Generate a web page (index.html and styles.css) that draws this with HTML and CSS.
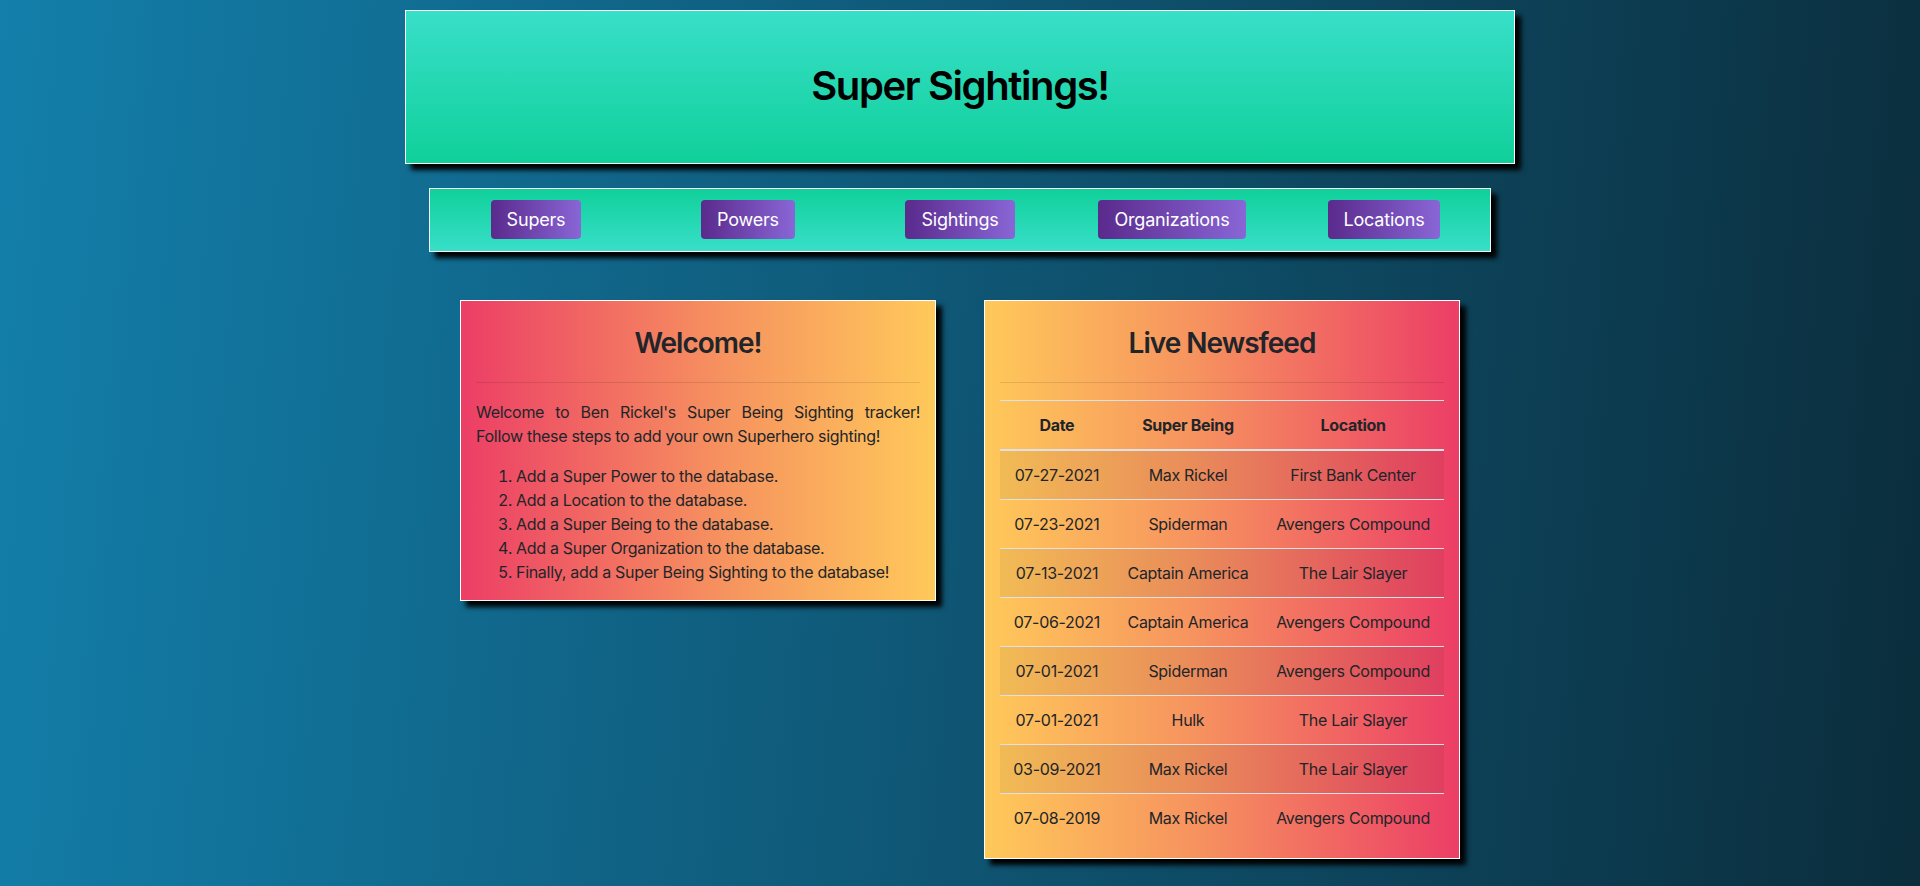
FILE: index.html
```html
<!DOCTYPE html>
<html lang="en">
<head>
<meta charset="utf-8">
<title>Super Sightings!</title>
<link rel="stylesheet" href="styles.css">
</head>
<body>
<div class="page">
  <header class="banner">
    <h1 class="banner-title">Super Sightings!</h1>
  </header>

  <nav class="nav">
    <div class="nav-cell"><a class="nav-btn" href="#">Supers</a></div>
    <div class="nav-cell"><a class="nav-btn" href="#">Powers</a></div>
    <div class="nav-cell"><a class="nav-btn" href="#">Sightings</a></div>
    <div class="nav-cell"><a class="nav-btn" href="#">Organizations</a></div>
    <div class="nav-cell"><a class="nav-btn" href="#">Locations</a></div>
  </nav>

  <main class="cards">
    <section class="card card-welcome">
      <h3 class="card-title">Welcome!</h3>
      <hr class="card-rule">
      <p class="welcome-text">Welcome to Ben Rickel's Super Being Sighting tracker! Follow these steps to add your own Superhero sighting!</p>
      <ol class="steps">
        <li>Add a Super Power to the database.</li>
        <li>Add a Location to the database.</li>
        <li>Add a Super Being to the database.</li>
        <li>Add a Super Organization to the database.</li>
        <li>Finally, add a Super Being Sighting to the database!</li>
      </ol>
    </section>

    <section class="card card-news">
      <h3 class="card-title">Live Newsfeed</h3>
      <hr class="card-rule">
      <table class="feed">
        <thead>
          <tr><th>Date</th><th>Super Being</th><th>Location</th></tr>
        </thead>
        <tbody>
          <tr><td>07-27-2021</td><td>Max Rickel</td><td>First Bank Center</td></tr>
          <tr><td>07-23-2021</td><td>Spiderman</td><td>Avengers Compound</td></tr>
          <tr><td>07-13-2021</td><td>Captain America</td><td>The Lair Slayer</td></tr>
          <tr><td>07-06-2021</td><td>Captain America</td><td>Avengers Compound</td></tr>
          <tr><td>07-01-2021</td><td>Spiderman</td><td>Avengers Compound</td></tr>
          <tr><td>07-01-2021</td><td>Hulk</td><td>The Lair Slayer</td></tr>
          <tr><td>03-09-2021</td><td>Max Rickel</td><td>The Lair Slayer</td></tr>
          <tr><td>07-08-2019</td><td>Max Rickel</td><td>Avengers Compound</td></tr>
        </tbody>
      </table>
    </section>
  </main>
</div>
</body>
</html>
```

FILE: styles.css
```css
* { box-sizing: border-box; }

html, body {
  margin: 0;
  padding: 0;
  min-height: 100%;
}

body {
  font-family: Inter, "Noto Sans", "Liberation Sans", sans-serif;
  font-size: 16px;
  line-height: 1.5;
  letter-spacing: -0.3px;
  color: #212529;
  background: linear-gradient(95deg, #137faa 0%, #0f5674 50%, #0b2d3c 100%);
  min-height: 886px;
}

.page {
  width: 1110px;
  margin: 0 auto;
  padding-top: 10px;
}

.banner {
  height: 154px;
  border: 1px solid #fff;
  background: linear-gradient(180deg, #38dfc9 0%, #10d09a 100%);
  box-shadow: 6px 6px 5px #000;
  display: flex;
  align-items: center;
  justify-content: center;
}

.banner-title {
  margin: 0 0 2px;
  font-size: 40px;
  font-weight: 600;
  line-height: 1.2;
  letter-spacing: -1.4px;
  color: #000;
}

.nav {
  margin: 24px 24px 0;
  height: 64px;
  border: 1px solid #fff;
  background: linear-gradient(180deg, #10d09a 0%, #38dfc9 100%);
  box-shadow: 6px 6px 5px #000;
  display: grid;
  grid-template-columns: repeat(5, 1fr);
  padding: 11px 0 12px;
}

.nav-cell {
  display: flex;
  justify-content: center;
  align-items: flex-start;
}

.nav-btn {
  display: inline-block;
  padding: 6px 16px;
  font-size: 18px;
  line-height: 27px;
  letter-spacing: -0.2px;
  color: #fff;
  text-decoration: none;
  border-radius: 4px;
  background: linear-gradient(90deg, #5a2a8c 0%, #8966d6 100%);
}

.cards {
  margin-top: 48px;
  display: flex;
  justify-content: center;
  align-items: flex-start;
  gap: 48px;
}

.card {
  width: 476px;
  border: 1px solid #fff;
  padding: 15px 15px 16px;
  box-shadow: 6px 6px 5px #000;
}

.card-welcome {
  background: linear-gradient(90deg, #ec3e66 0%, #f6925f 55%, #ffc95a 100%);
}

.card-news {
  background: linear-gradient(90deg, #ffc95a 0%, #f6925f 45%, #ec3e66 100%);
}

.card-title {
  margin: 10px 0 0;
  font-size: 28px;
  font-weight: 600;
  line-height: 34px;
  letter-spacing: -1px;
  text-align: center;
  color: #212529;
}

.card-rule {
  margin: 22px 0 17px;
  border: 0;
  border-top: 1px solid rgba(0, 0, 0, 0.1);
  height: 0;
}

.welcome-text {
  margin: 0 0 16px;
  text-align: justify;
}

.steps {
  margin: 0;
  padding-left: 40px;
}

.feed {
  width: 100%;
  border-collapse: collapse;
  color: #212529;
}

.feed th,
.feed td {
  padding: 12px;
  text-align: center;
  vertical-align: top;
  border-top: 1px solid #dee2e6;
  white-space: nowrap;
}

.feed th {
  font-weight: 700;
  border-bottom: 2px solid #dee2e6;
}

.feed tbody tr:nth-child(odd) {
  background-color: rgba(0, 0, 0, 0.05);
}
```
